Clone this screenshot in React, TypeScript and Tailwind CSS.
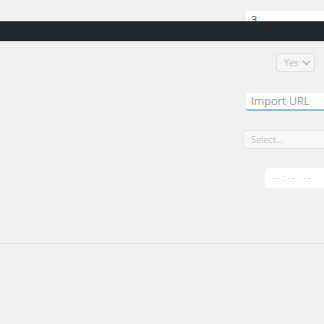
import React from "react";

export default function App() {
  return (
    <div className="w-[324px] h-[324px] overflow-hidden bg-[#f1f1f1] relative" style={{ fontFamily: '"Open Sans", "Noto Sans", sans-serif' }}>
      <div className="h-[21px] relative">
        <div className="absolute left-[246px] top-[11px] w-[100px] h-[20px] bg-white pl-[5px] text-[11px] leading-[14px] pt-[2px] text-[#555]">3</div>
      </div>
      <div className="relative h-[20px] bg-[#23282d] border-t border-[#4b5055]"></div>
      <div className="h-px bg-[#d6d6d6]"></div>
      <div className="flex flex-col items-end">
        <div className="mt-[11px] mr-[9px] w-[39px] h-[19px] bg-[#f5f5f5] border border-[#e2e2e2] rounded-[3px] flex items-center pl-[7px] gap-[4px] text-[9px] text-[#c0c0c0]">
          <span>Yes</span>
          <svg width="9" height="6" viewBox="0 0 9 6" fill="none"><path d="M0.8 0.8l3.7 3.7L8.2 0.8" stroke="#b8b8b8" strokeWidth="1.5" /></svg>
        </div>
        <div className="mt-[21px] flex justify-start w-[324px] pl-[246px]">
          <div className="w-[100px] h-[18px] bg-white border-b-2 border-[#8cc0e0] rounded-bl-[2px] pl-[5px] text-[11px] leading-[16px] text-[#9a9a9a] shrink-0">Import URL</div>
        </div>
        <div className="mt-[19px] flex w-[324px] pl-[243px]">
          <div className="w-[100px] h-[19px] bg-[#f7f7f7] border border-[#e6e6e6] rounded-[3px] pl-[7px] text-[9px] leading-[17px] text-[#c5c5c5] shrink-0">Select...</div>
        </div>
        <div className="mt-[19px] flex w-[324px] pl-[265px]">
          <div className="w-[80px] h-[20px] bg-white rounded-[4px] pl-[7px] flex items-center text-[9px] text-[#cccccc] shrink-0">
            <span className="tracking-[1.5px]">--</span>
            <span className="mx-[2px]">:</span>
            <span className="tracking-[1.5px]">--</span>
            <span className="ml-[7px] tracking-[1.5px]">--</span>
          </div>
        </div>
      </div>
      <div className="absolute left-0 top-[243px] w-full h-px bg-[#e4e4e4]"></div>
    </div>
  );
}
